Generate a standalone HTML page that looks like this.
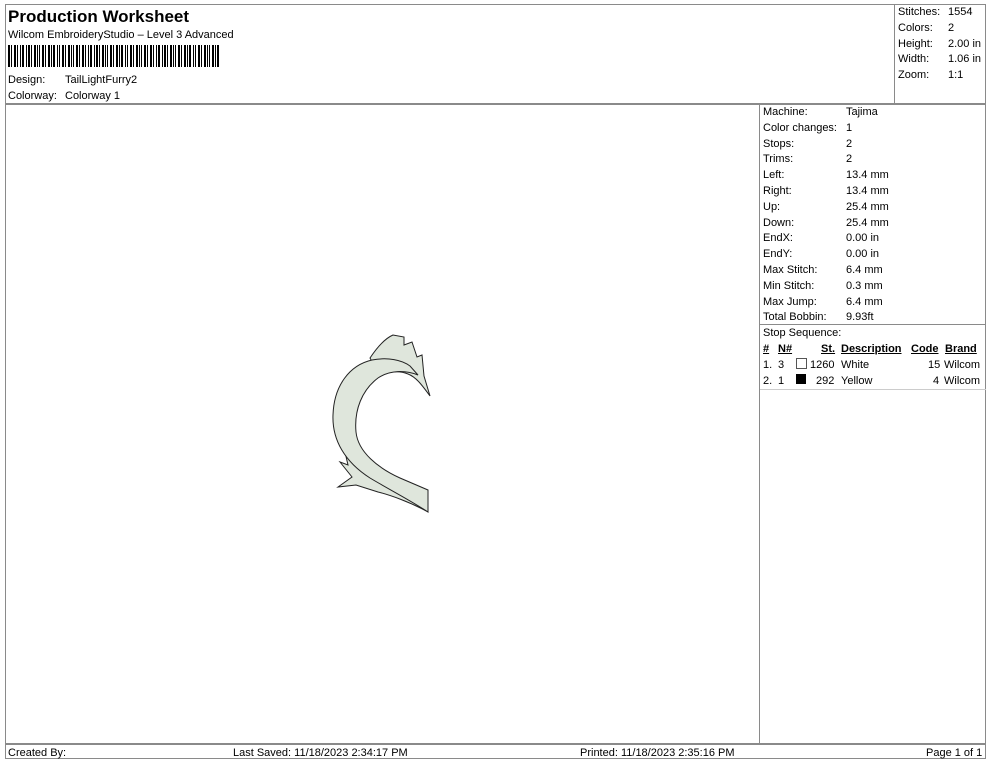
<!DOCTYPE html>
<html><head><meta charset="utf-8"><style>
body{margin:0;width:990px;height:762px;background:#fff;font-family:"Liberation Sans",sans-serif;font-size:11px;color:#000;position:relative;overflow:hidden}
.a{position:absolute;white-space:nowrap;line-height:13px;margin-top:1px}
.l{position:absolute;background:#8a8a8a}
u{text-decoration:underline;font-weight:bold}
</style></head><body>
<div class="l" style="left:5px;top:4px;width:981px;height:1px"></div>
<div class="l" style="left:5px;top:758px;width:981px;height:1px"></div>
<div class="l" style="left:5px;top:4px;width:1px;height:755px"></div>
<div class="l" style="left:985px;top:4px;width:1px;height:755px"></div>
<div class="l" style="left:5px;top:103px;width:981px;height:2px"></div>
<div class="l" style="left:894px;top:4px;width:1px;height:100px"></div>
<div class="l" style="left:759px;top:104px;width:1px;height:640px"></div>
<div class="l" style="left:5px;top:743px;width:981px;height:2px"></div>
<div class="l" style="left:760px;top:324px;width:226px;height:1px"></div>
<div class="l" style="left:760px;top:389px;width:226px;height:1px;background:#ccc"></div>

<div class="a" style="left:8px;top:6px;font-size:17px;font-weight:bold;line-height:20px">Production Worksheet</div>
<div class="a" style="left:8px;top:28px">Wilcom EmbroideryStudio – Level 3 Advanced</div>
<svg style="position:absolute;left:8px;top:45px" width="212" height="22">
<g fill="#000">
<rect x="0" y="0" width="2" height="22"/><rect x="3" y="0" width="1" height="22"/><rect x="6" y="0" width="2" height="22"/><rect x="9" y="0" width="1" height="22"/><rect x="12" y="0" width="1" height="22"/><rect x="14" y="0" width="2" height="22"/><rect x="18" y="0" width="1" height="22"/><rect x="20" y="0" width="2" height="22"/><rect x="23" y="0" width="1" height="22"/><rect x="26" y="0" width="2" height="22"/><rect x="29" y="0" width="1" height="22"/><rect x="31" y="0" width="1" height="22"/><rect x="34" y="0" width="2" height="22"/><rect x="37" y="0" width="1" height="22"/><rect x="40" y="0" width="2" height="22"/><rect x="43" y="0" width="1" height="22"/><rect x="45" y="0" width="2" height="22"/><rect x="49" y="0" width="1" height="22"/><rect x="51" y="0" width="1" height="22"/><rect x="54" y="0" width="2" height="22"/><rect x="57" y="0" width="1" height="22"/><rect x="60" y="0" width="2" height="22"/><rect x="63" y="0" width="1" height="22"/><rect x="65" y="0" width="1" height="22"/><rect x="68" y="0" width="2" height="22"/><rect x="71" y="0" width="1" height="22"/><rect x="74" y="0" width="2" height="22"/><rect x="77" y="0" width="1" height="22"/><rect x="80" y="0" width="1" height="22"/><rect x="82" y="0" width="2" height="22"/><rect x="86" y="0" width="1" height="22"/><rect x="88" y="0" width="2" height="22"/><rect x="91" y="0" width="1" height="22"/><rect x="94" y="0" width="2" height="22"/><rect x="97" y="0" width="1" height="22"/><rect x="99" y="0" width="1" height="22"/><rect x="102" y="0" width="2" height="22"/><rect x="105" y="0" width="1" height="22"/><rect x="108" y="0" width="2" height="22"/><rect x="111" y="0" width="1" height="22"/><rect x="113" y="0" width="2" height="22"/><rect x="117" y="0" width="1" height="22"/><rect x="119" y="0" width="1" height="22"/><rect x="122" y="0" width="2" height="22"/><rect x="125" y="0" width="1" height="22"/><rect x="128" y="0" width="2" height="22"/><rect x="131" y="0" width="1" height="22"/><rect x="133" y="0" width="1" height="22"/><rect x="136" y="0" width="2" height="22"/><rect x="139" y="0" width="1" height="22"/><rect x="142" y="0" width="2" height="22"/><rect x="145" y="0" width="1" height="22"/><rect x="148" y="0" width="1" height="22"/><rect x="150" y="0" width="2" height="22"/><rect x="154" y="0" width="1" height="22"/><rect x="156" y="0" width="2" height="22"/><rect x="159" y="0" width="1" height="22"/><rect x="162" y="0" width="2" height="22"/><rect x="165" y="0" width="1" height="22"/><rect x="167" y="0" width="1" height="22"/><rect x="170" y="0" width="2" height="22"/><rect x="173" y="0" width="1" height="22"/><rect x="176" y="0" width="2" height="22"/><rect x="179" y="0" width="1" height="22"/><rect x="181" y="0" width="2" height="22"/><rect x="185" y="0" width="1" height="22"/><rect x="187" y="0" width="1" height="22"/><rect x="190" y="0" width="2" height="22"/><rect x="193" y="0" width="1" height="22"/><rect x="196" y="0" width="2" height="22"/><rect x="199" y="0" width="1" height="22"/><rect x="201" y="0" width="1" height="22"/><rect x="204" y="0" width="2" height="22"/><rect x="207" y="0" width="1" height="22"/><rect x="209" y="0" width="2" height="22"/>
</g></svg>
<div class="a" style="left:8px;top:73px">Design:</div><div class="a" style="left:65px;top:73px">TailLightFurry2</div>
<div class="a" style="left:8px;top:89px">Colorway:</div><div class="a" style="left:65px;top:89px">Colorway 1</div>

<div class="a" style="left:898px;top:5px">Stitches:</div><div class="a" style="left:948px;top:5px">1554</div>
<div class="a" style="left:898px;top:21px">Colors:</div><div class="a" style="left:948px;top:21px">2</div>
<div class="a" style="left:898px;top:37px">Height:</div><div class="a" style="left:948px;top:37px">2.00 in</div>
<div class="a" style="left:898px;top:52px">Width:</div><div class="a" style="left:948px;top:52px">1.06 in</div>
<div class="a" style="left:898px;top:68px">Zoom:</div><div class="a" style="left:948px;top:68px">1:1</div>

<div class="a" style="left:763px;top:105px">Machine:</div><div class="a" style="left:846px;top:105px">Tajima</div>
<div class="a" style="left:763px;top:121px">Color changes:</div><div class="a" style="left:846px;top:121px">1</div>
<div class="a" style="left:763px;top:137px">Stops:</div><div class="a" style="left:846px;top:137px">2</div>
<div class="a" style="left:763px;top:152px">Trims:</div><div class="a" style="left:846px;top:152px">2</div>
<div class="a" style="left:763px;top:168px">Left:</div><div class="a" style="left:846px;top:168px">13.4 mm</div>
<div class="a" style="left:763px;top:184px">Right:</div><div class="a" style="left:846px;top:184px">13.4 mm</div>
<div class="a" style="left:763px;top:200px">Up:</div><div class="a" style="left:846px;top:200px">25.4 mm</div>
<div class="a" style="left:763px;top:216px">Down:</div><div class="a" style="left:846px;top:216px">25.4 mm</div>
<div class="a" style="left:763px;top:231px">EndX:</div><div class="a" style="left:846px;top:231px">0.00 in</div>
<div class="a" style="left:763px;top:247px">EndY:</div><div class="a" style="left:846px;top:247px">0.00 in</div>
<div class="a" style="left:763px;top:263px">Max Stitch:</div><div class="a" style="left:846px;top:263px">6.4 mm</div>
<div class="a" style="left:763px;top:279px">Min Stitch:</div><div class="a" style="left:846px;top:279px">0.3 mm</div>
<div class="a" style="left:763px;top:295px">Max Jump:</div><div class="a" style="left:846px;top:295px">6.4 mm</div>
<div class="a" style="left:763px;top:310px">Total Bobbin:</div><div class="a" style="left:846px;top:310px">9.93ft</div>
<div class="a" style="left:763px;top:326px">Stop Sequence:</div>
<div class="a" style="left:763px;top:342px"><u>#</u></div>
<div class="a" style="left:778px;top:342px"><u>N#</u></div>
<div class="a" style="left:821px;top:342px"><u>St.</u></div>
<div class="a" style="left:841px;top:342px"><u>Description</u></div>
<div class="a" style="left:911px;top:342px"><u>Code</u></div>
<div class="a" style="left:945px;top:342px"><u>Brand</u></div>
<div class="a" style="left:763px;top:358px">1.</div><div class="a" style="left:778px;top:358px">3</div>
<div style="position:absolute;left:796px;top:358px;width:9px;height:9px;border:1px solid #555"></div>
<div class="a" style="left:810px;top:358px">1260</div><div class="a" style="left:841px;top:358px">White</div>
<div class="a" style="left:928px;top:358px">15</div><div class="a" style="left:944px;top:358px">Wilcom</div>
<div class="a" style="left:763px;top:374px">2.</div><div class="a" style="left:778px;top:374px">1</div>
<div style="position:absolute;left:796px;top:374px;width:10px;height:10px;background:#000"></div>
<div class="a" style="left:816px;top:374px">292</div><div class="a" style="left:841px;top:374px">Yellow</div>
<div class="a" style="left:933px;top:374px">4</div><div class="a" style="left:944px;top:374px">Wilcom</div>

<svg style="position:absolute;left:0;top:0" width="990" height="762">
<g fill="#dfe6dc" stroke="#222" stroke-width="1">
<path d="M370 358 C378 346 386 338 393 335 L404 337 L404 345 L412 342 L417 357 L422 355 L424 376 L430 396 C422 385 416 377 408 374 C398 370 388 372 380 376 Z"/>
<path d="M340 462 L348 465 L344 448 L356 460 L375 468 C395 476 415 490 428 497 L428 512 C410 502 390 495 378 492 L356 485 L338 487 L352 477 Z"/>
<path d="M428 490 L428 512 C410 500 390 490 370 478 C345 462 332 440 333 415 C334 385 350 365 372 360 C388 357 402 360 410 366 L418 375 C405 370 390 370 378 378 C362 390 354 410 356 432 C358 452 378 468 400 478 Z"/>
</g></svg>

<div class="a" style="left:8px;top:746px">Created By:</div>
<div class="a" style="left:233px;top:746px">Last Saved: 11/18/2023 2:34:17 PM</div>
<div class="a" style="left:580px;top:746px">Printed: 11/18/2023 2:35:16 PM</div>
<div class="a" style="left:926px;top:746px">Page 1 of 1</div>
</body></html>
